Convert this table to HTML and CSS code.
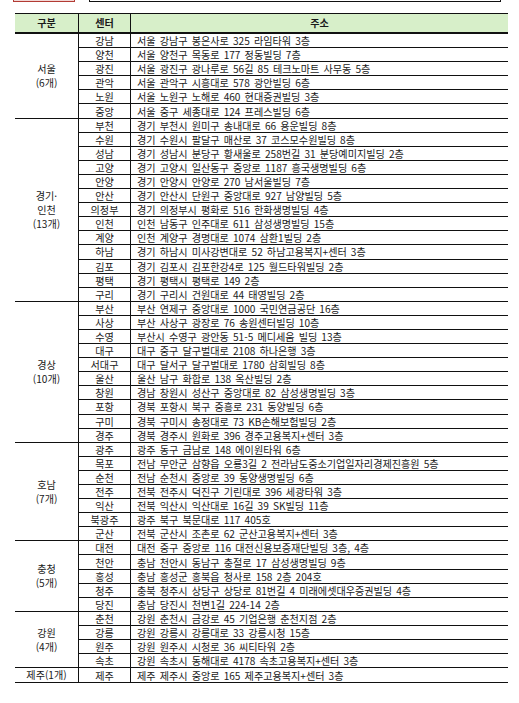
FILE: index.html
```html
<!DOCTYPE html>
<html lang="ko">
<head>
<meta charset="utf-8">
<title>센터 주소</title>
<link rel="stylesheet" href="styles.css">
</head>
<body>
<div class="top-strip">
  <div class="tag-red"></div>
  <div class="tag-box"></div>
</div>
<table class="centers">
  <thead>
    <tr><th class="c-region">구분</th><th class="c-center">센터</th><th class="c-addr">주소</th></tr>
  </thead>
  <tbody>
    <tr class="first"><td class="region" rowspan="6">서울<br>(6개)</td><td class="center">강남</td><td class="addr">서울 강남구 봉은사로 325 라임타워 3층</td></tr>
    <tr><td class="center">양천</td><td class="addr">서울 양천구 목동로 177 정동빌딩 7층</td></tr>
    <tr><td class="center">광진</td><td class="addr">서울 광진구 광나루로 56길 85 테크노마트 사무동 5층</td></tr>
    <tr><td class="center">관악</td><td class="addr">서울 관악구 시흥대로 578 광안빌딩 6층</td></tr>
    <tr><td class="center">노원</td><td class="addr">서울 노원구 노해로 460 현대증권빌딩 3층</td></tr>
    <tr><td class="center">중앙</td><td class="addr">서울 중구 세종대로 124 프레스빌딩 6층</td></tr>

    <tr class="first"><td class="region" rowspan="13">경기·<br>인천<br>(13개)</td><td class="center">부천</td><td class="addr">경기 부천시 원미구 송내대로 66 용운빌딩 8층</td></tr>
    <tr><td class="center">수원</td><td class="addr">경기 수원시 팔달구 매산로 37 코스모수원빌딩 8층</td></tr>
    <tr><td class="center">성남</td><td class="addr">경기 성남시 분당구 황새울로 258번길 31 분당예미지빌딩 2층</td></tr>
    <tr><td class="center">고양</td><td class="addr">경기 고양시 일산동구 중앙로 1187 흥국생명빌딩 6층</td></tr>
    <tr><td class="center">안양</td><td class="addr">경기 안양시 안양로 270 남서울빌딩 7층</td></tr>
    <tr><td class="center">안산</td><td class="addr">경기 안산시 단원구 중앙대로 927 남양빌딩 5층</td></tr>
    <tr><td class="center">의정부</td><td class="addr">경기 의정부시 평화로 516 한화생명빌딩 4층</td></tr>
    <tr><td class="center">인천</td><td class="addr">인천 남동구 인주대로 611 삼성생명빌딩 15층</td></tr>
    <tr><td class="center">계양</td><td class="addr">인천 계양구 경명대로 1074 삼환1빌딩 2층</td></tr>
    <tr><td class="center">하남</td><td class="addr">경기 하남시 미사강변대로 52 하남고용복지+센터 3층</td></tr>
    <tr><td class="center">김포</td><td class="addr">경기 김포시 김포한강4로 125 월드타워빌딩 2층</td></tr>
    <tr><td class="center">평택</td><td class="addr">경기 평택시 평택로 149 2층</td></tr>
    <tr><td class="center">구리</td><td class="addr">경기 구리시 건원대로 44 태영빌딩 2층</td></tr>

    <tr class="first"><td class="region" rowspan="10">경상<br>(10개)</td><td class="center">부산</td><td class="addr">부산 연제구 중앙대로 1000 국민연금공단 16층</td></tr>
    <tr><td class="center">사상</td><td class="addr">부산 사상구 광장로 76 송원센터빌딩 10층</td></tr>
    <tr><td class="center">수영</td><td class="addr">부산시 수영구 광안동 51-5 메디세움 빌딩 13층</td></tr>
    <tr><td class="center">대구</td><td class="addr">대구 중구 달구벌대로 2108 하나은행 3층</td></tr>
    <tr><td class="center">서대구</td><td class="addr">대구 달서구 달구벌대로 1780 삼희빌딩 8층</td></tr>
    <tr><td class="center">울산</td><td class="addr">울산 남구 화합로 138 옥산빌딩 2층</td></tr>
    <tr><td class="center">창원</td><td class="addr">경남 창원시 성산구 중앙대로 82 삼성생명빌딩 3층</td></tr>
    <tr><td class="center">포항</td><td class="addr">경북 포항시 북구 중흥로 231 동양빌딩 6층</td></tr>
    <tr><td class="center">구미</td><td class="addr">경북 구미시 송정대로 73 KB손해보험빌딩 2층</td></tr>
    <tr><td class="center">경주</td><td class="addr">경북 경주시 원화로 396 경주고용복지+센터 3층</td></tr>

    <tr class="first"><td class="region" rowspan="7">호남<br>(7개)</td><td class="center">광주</td><td class="addr">광주 동구 금남로 148 에이원타워 6층</td></tr>
    <tr><td class="center">목포</td><td class="addr">전남 무안군 삼향읍 오룡3길 2 전라남도중소기업일자리경제진흥원 5층</td></tr>
    <tr><td class="center">순천</td><td class="addr">전남 순천시 중앙로 39 동양생명빌딩 6층</td></tr>
    <tr><td class="center">전주</td><td class="addr">전북 전주시 덕진구 기린대로 396 세광타워 3층</td></tr>
    <tr><td class="center">익산</td><td class="addr">전북 익산시 익산대로 16길 39 SK빌딩 11층</td></tr>
    <tr><td class="center">북광주</td><td class="addr">광주 북구 북문대로 117 405호</td></tr>
    <tr><td class="center">군산</td><td class="addr">전북 군산시 조촌로 62 군산고용복지+센터 3층</td></tr>

    <tr class="first"><td class="region" rowspan="5">충청<br>(5개)</td><td class="center">대전</td><td class="addr">대전 중구 중앙로 116 대전신용보증재단빌딩 3층, 4층</td></tr>
    <tr><td class="center">천안</td><td class="addr">충남 천안시 동남구 충절로 17 삼성생명빌딩 9층</td></tr>
    <tr><td class="center">홍성</td><td class="addr">충남 홍성군 홍북읍 청사로 158 2층 204호</td></tr>
    <tr><td class="center">청주</td><td class="addr">충북 청주시 상당구 상당로 81번길 4 미래에셋대우증권빌딩 4층</td></tr>
    <tr><td class="center">당진</td><td class="addr">충남 당진시 천변1길 224-14 2층</td></tr>

    <tr class="first"><td class="region" rowspan="4">강원<br>(4개)</td><td class="center">춘천</td><td class="addr">강원 춘천시 금강로 45 기업은행 춘천지점 2층</td></tr>
    <tr><td class="center">강릉</td><td class="addr">강원 강릉시 강릉대로 33 강릉시청 15층</td></tr>
    <tr><td class="center">원주</td><td class="addr">강원 원주시 시청로 36 씨티타워 2층</td></tr>
    <tr><td class="center">속초</td><td class="addr">강원 속초시 동해대로 4178 속초고용복지+센터 3층</td></tr>

    <tr class="first last"><td class="region">제주(1개)</td><td class="center">제주</td><td class="addr">제주 제주시 중앙로 165 제주고용복지+센터 3층</td></tr>
  </tbody>
</table>
</body>
</html>
```
FILE: styles.css
```css
html, body {
  margin: 0;
  padding: 0;
  background: #ffffff;
}
body {
  font-family: "Noto Sans CJK KR", "Noto Sans", sans-serif;
  color: #1a1a1a;
  font-size: 10.1px;
}
.top-strip {
  display: flex;
  height: 3px;
  padding-left: 13px;
  gap: 14px;
}
.tag-red {
  width: 60px;
  height: 1px;
  border: 1px solid #b23b34;
  border-top: none;
  background: #f2d7d5;
}
.tag-box {
  width: 410px;
  height: 1px;
  border: 1px solid #111;
  border-top: none;
}
.centers {
  margin: 10px 0 0 15px;
  width: 491px;
  border-collapse: collapse;
  table-layout: fixed;
}
.c-region { width: 63px; }
.c-center { width: 51px; }
.c-addr { width: 377px; }
.centers th {
  background: #d7efc9;
  font-weight: bold;
  font-size: 10.1px;
  height: 18px;
  line-height: 18px;
  padding: 0;
  border-top: 1px solid #111;
  border-bottom: 2px solid #111;
  text-align: center;
}
.centers th.c-region,
.centers th.c-center {
  border-right: 1px solid #111;
}
.centers td {
  height: 13.1px;
  line-height: 13px;
  padding: 0;
  border-top: 1px solid #111;
  white-space: nowrap;
  vertical-align: middle;
}
.centers td.region {
  text-align: center;
  border-right: 1px solid #111;
  line-height: 14px;
}
.centers td.center {
  text-align: center;
  border-right: 1px solid #111;
}
.centers td.addr {
  text-align: left;
  padding-left: 6px;
  word-spacing: 1.3px;
}
.centers tr.first td {
  border-top: 1px solid #111;
}
.centers tr.last td {
  border-bottom: 1px solid #111;
}
.centers thead + tbody tr:first-child td {
  border-top: none;
}
```
